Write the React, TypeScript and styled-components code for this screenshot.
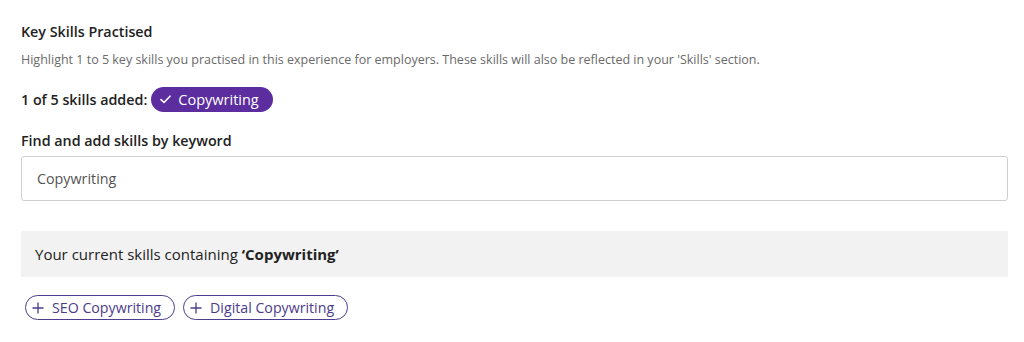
import React from 'react';
import styled, { createGlobalStyle } from 'styled-components';

const GlobalStyle = createGlobalStyle`
  body {
    margin: 0;
    background: #ffffff;
    font-family: 'Open Sans', 'Noto Sans', sans-serif;
    color: #222;
  }
`;

const purple = '#5b2d9e';

const Section = styled.div`
  padding: 22px 16px 0 21px;
`;

const Title = styled.h3`
  margin: 0;
  font-size: 14.3px;
  line-height: 20px;
  font-weight: 600;
  color: #222;
`;

const Hint = styled.p`
  margin: 9px 0 0;
  font-size: 12.5px;
  line-height: 18px;
  color: #6a6a6a;
`;

const AddedRow = styled.div`
  display: flex;
  align-items: center;
  gap: 4px;
  margin-top: 18px;
  font-size: 14.3px;
  font-weight: 600;
  color: #222;
`;

const SelectedPill = styled.span`
  display: inline-flex;
  align-items: center;
  gap: 7px;
  height: 25px;
  padding: 0 14px 0 9px;
  border-radius: 13px;
  background: ${purple};
  color: #fff;
  font-size: 14.5px;
  font-weight: 400;
`;

const Label = styled.label`
  display: block;
  margin-top: 19px;
  font-size: 14.3px;
  line-height: 20px;
  font-weight: 600;
  color: #222;
`;

const Input = styled.input`
  display: block;
  box-sizing: border-box;
  width: 100%;
  height: 45px;
  margin-top: 5px;
  padding: 0 15px;
  border: 1px solid #cfcfcf;
  border-radius: 3px;
  font-family: inherit;
  font-size: 14.3px;
  color: #555;
  outline: none;
`;

const ResultsHeader = styled.div`
  margin-top: 30px;
  height: 46px;
  display: flex;
  align-items: center;
  padding: 0 14px;
  background: #f2f2f2;
  font-size: 15px;
  color: #222;

  strong {
    font-weight: 700;
    margin-left: 4px;
  }
`;

const ChipList = styled.div`
  display: flex;
  gap: 8px;
  margin-top: 18px;
  padding-left: 4px;
`;

const Chip = styled.button`
  display: inline-flex;
  align-items: center;
  gap: 8px;
  height: 25px;
  box-sizing: border-box;
  padding: 0 13px 0 6px;
  border: 1px solid #4d3d8f;
  border-radius: 13px;
  background: #fff;
  color: #4b3b8c;
  font-family: inherit;
  font-size: 14.2px;
`;

const Check = () => (
  <svg width="11" height="9" viewBox="0 0 11 9" fill="none">
    <path d="M1 4.6 L4 7.5 L10 1.2" stroke="#fff" strokeWidth="1.6" strokeLinecap="round" strokeLinejoin="round" />
  </svg>
);

const Plus = () => (
  <svg width="12" height="12" viewBox="0 0 12 12" fill="none">
    <path d="M6 0.5 V11.5 M0.5 6 H11.5" stroke="#4b3b8c" strokeWidth="1.3" />
  </svg>
);

const suggestions = ['SEO Copywriting', 'Digital Copywriting'];

const App = () => (
  <>
    <GlobalStyle />
    <Section>
      <Title>Key Skills Practised</Title>
      <Hint>
        Highlight 1 to 5 key skills you practised in this experience for employers. These skills will also be reflected in your 'Skills' section.
      </Hint>
      <AddedRow>
        1 of 5 skills added:
        <SelectedPill>
          <Check />
          Copywriting
        </SelectedPill>
      </AddedRow>
      <Label htmlFor="skill-search">Find and add skills by keyword</Label>
      <Input id="skill-search" defaultValue="Copywriting" />
      <ResultsHeader>
        Your current skills containing <strong>‘Copywriting’</strong>
      </ResultsHeader>
      <ChipList>
        {suggestions.map((s) => (
          <Chip key={s}>
            <Plus />
            {s}
          </Chip>
        ))}
      </ChipList>
    </Section>
  </>
);

export default App;
